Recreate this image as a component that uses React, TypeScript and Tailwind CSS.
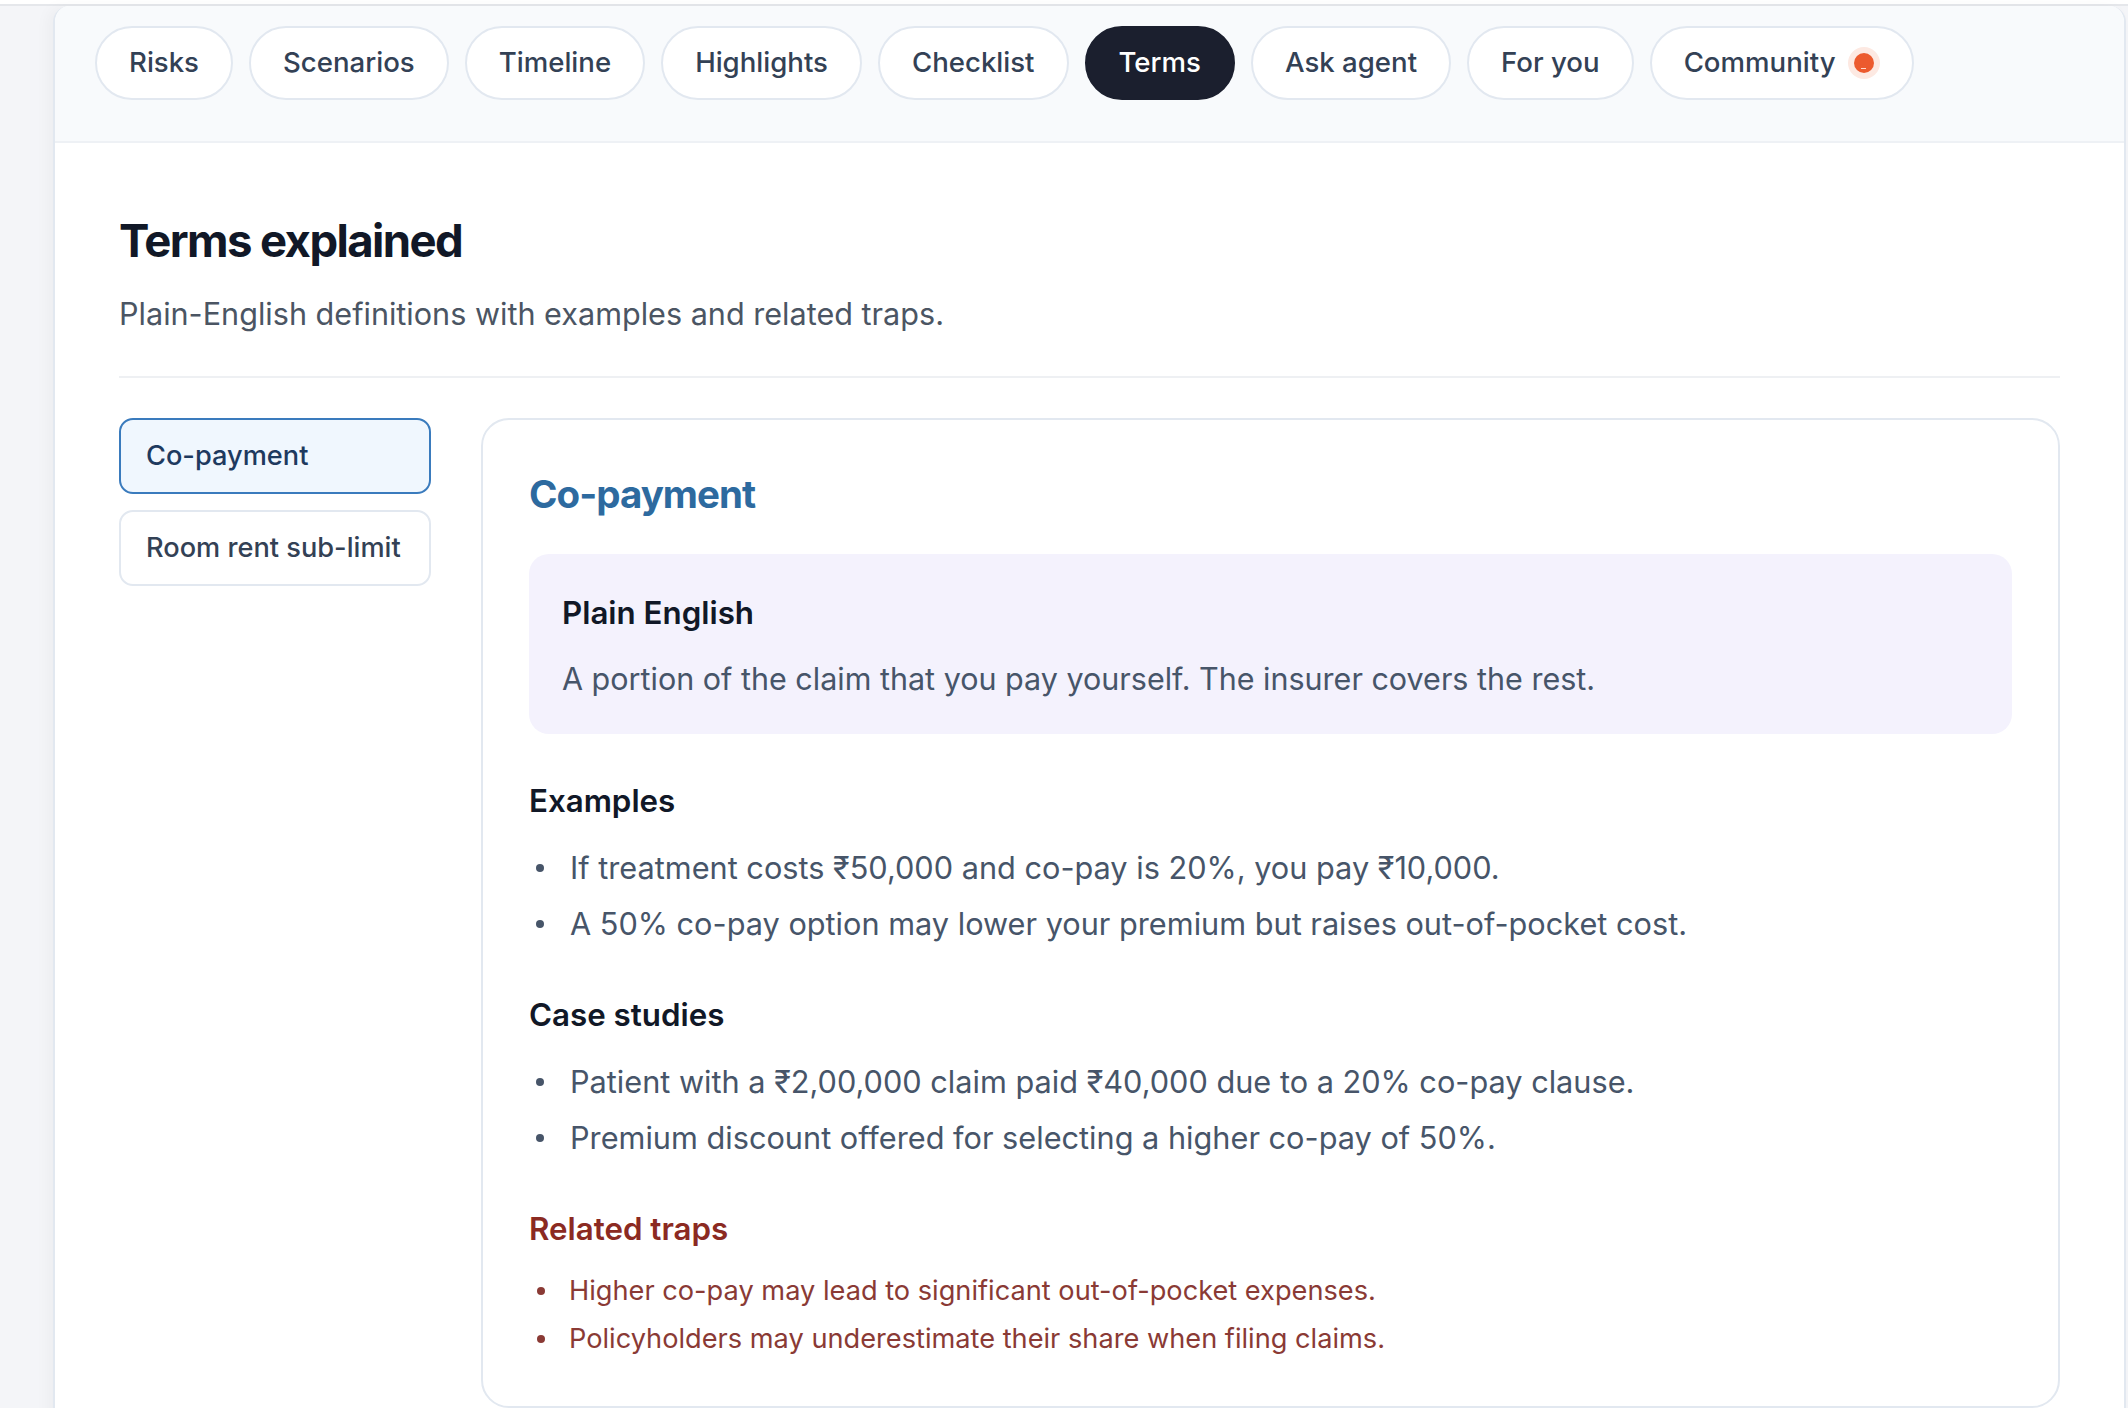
import React from "react";

const tabs = [
  "Risks",
  "Scenarios",
  "Timeline",
  "Highlights",
  "Checklist",
  "Terms",
  "Ask agent",
  "For you",
  "Community",
];

const terms = ["Co-payment", "Room rent sub-limit"];

const examples = [
  "If treatment costs ₹50,000 and co-pay is 20%, you pay ₹10,000.",
  "A 50% co-pay option may lower your premium but raises out-of-pocket cost.",
];

const caseStudies = [
  "Patient with a ₹2,00,000 claim paid ₹40,000 due to a 20% co-pay clause.",
  "Premium discount offered for selecting a higher co-pay of 50%.",
];

const traps = [
  "Higher co-pay may lead to significant out-of-pocket expenses.",
  "Policyholders may underestimate their share when filing claims.",
];

const BulletList = ({ items }: { items: string[] }) => (
  <ul className="mt-[20px] flex flex-col gap-[11px]">
    {items.map((item, i) => (
      <li key={i} className="flex items-center text-[30.7px] leading-[45px] text-[#475569]">
        <span className="ml-[7px] mr-[26px] h-[8px] w-[8px] shrink-0 rounded-full bg-[#475569]" />
        {item}
      </li>
    ))}
  </ul>
);

export default function App() {
  return (
    <div className="min-h-screen bg-[#f4f5f8]" style={{ fontFamily: "Inter, 'Noto Sans', sans-serif" }}>
      <div className="h-[4px] bg-white" />
      <div className="h-[2px] bg-[#e5e7eb]" />

      <div className="ml-[53px] mr-[2px] overflow-hidden rounded-t-[16px] border-x-2 border-[#e2e8f0] bg-white pb-[40px] shadow-[-6px_0_14px_rgba(15,23,42,0.03)]">
        {/* tab strip */}
        <div className="flex items-center gap-[16px] border-b-2 border-[#eef1f5] bg-[#f8fafc] px-[40px] pt-[20px] pb-[41px]">
          {tabs.map((tab) =>
            tab === "Terms" ? (
              <div
                key={tab}
                className="flex h-[74px] items-center rounded-full border-2 border-[#1b1f2e] bg-[#1b1f2e] px-[32px] text-[27.6px] font-medium text-white"
              >
                {tab}
              </div>
            ) : (
              <div
                key={tab}
                className="flex h-[74px] items-center rounded-full border-2 border-[#e2e8f0] bg-white px-[32px] text-[27.6px] font-medium text-[#334155]"
              >
                {tab}
                {tab === "Community" && (
                  <span className="ml-[12px] flex h-[32px] w-[32px] items-center justify-center rounded-full bg-[#fde9e2]">
                    <span className="flex h-[20px] w-[20px] items-end justify-center rounded-full bg-[#ec5a2e] pb-[4px]">
                      <span className="h-[1px] w-[5px] bg-[#ffd9cc]" />
                    </span>
                  </span>
                )}
              </div>
            )
          )}
        </div>

        {/* body */}
        <div className="px-[64px] pt-[70px]">
          <h1 className="text-[45.5px] font-bold leading-[56px] tracking-[-0.035em] text-[#111827]">
            Terms explained
          </h1>
          <p className="mt-[22px] text-[30.6px] leading-[45px] text-[#4b5563]">
            Plain-English definitions with examples and related traps.
          </p>
          <div className="mt-[40px] h-[2px] bg-[#eef0f3]" />

          <div className="mt-[40px] flex items-start gap-[50px]">
            <div className="flex w-[312px] shrink-0 flex-col gap-[16px]">
              {terms.map((term, i) => (
                <div
                  key={term}
                  className={
                    i === 0
                      ? "flex h-[76px] items-center whitespace-nowrap rounded-[14px] border-2 border-[#3a7bbd] bg-[#f0f7fe] px-[25px] text-[27.2px] font-medium text-[#1e3a5f]"
                      : "flex h-[76px] items-center whitespace-nowrap rounded-[14px] border-2 border-[#e2e8f0] bg-white px-[25px] text-[27.2px] font-medium text-[#334155]"
                  }
                >
                  {term}
                </div>
              ))}
            </div>

            <div className="flex-1 rounded-[28px] border-2 border-[#e2e8f0] bg-white px-[46px] pt-[46px] pb-[48px]">
              <h2 className="text-[38.5px] font-bold leading-[56px] tracking-[-0.025em] text-[#2d6a9f]">
                Co-payment
              </h2>

              <div className="mt-[32px] rounded-[20px] bg-[#f4f2fd] px-[33px] pt-[37px] pb-[34px]">
                <h3 className="text-[31.3px] font-semibold leading-[45px] text-[#111827]">Plain English</h3>
                <p className="mt-[22px] text-[30.5px] leading-[42px] text-[#475569]">
                  A portion of the claim that you pay yourself. The insurer covers the rest.
                </p>
              </div>

              <h3 className="mt-[43px] text-[31.3px] font-semibold leading-[48px] text-[#111827]">Examples</h3>
              <BulletList items={examples} />

              <h3 className="mt-[45px] text-[31.3px] font-semibold leading-[48px] text-[#111827]">Case studies</h3>
              <BulletList items={caseStudies} />

              <h3 className="mt-[45px] text-[31.3px] font-semibold leading-[48px] text-[#8b2a22]">Related traps</h3>
              <ul className="mt-[18px] flex flex-col gap-[9px]">
                {traps.map((t, i) => (
                  <li key={i} className="flex items-center text-[27.2px] leading-[39px] text-[#8a3a35]">
                    <span className="ml-[8px] mr-[24px] h-[8px] w-[8px] shrink-0 rounded-full bg-[#8a3a35]" />
                    {t}
                  </li>
                ))}
              </ul>
            </div>
          </div>
        </div>
      </div>
    </div>
  );
}
